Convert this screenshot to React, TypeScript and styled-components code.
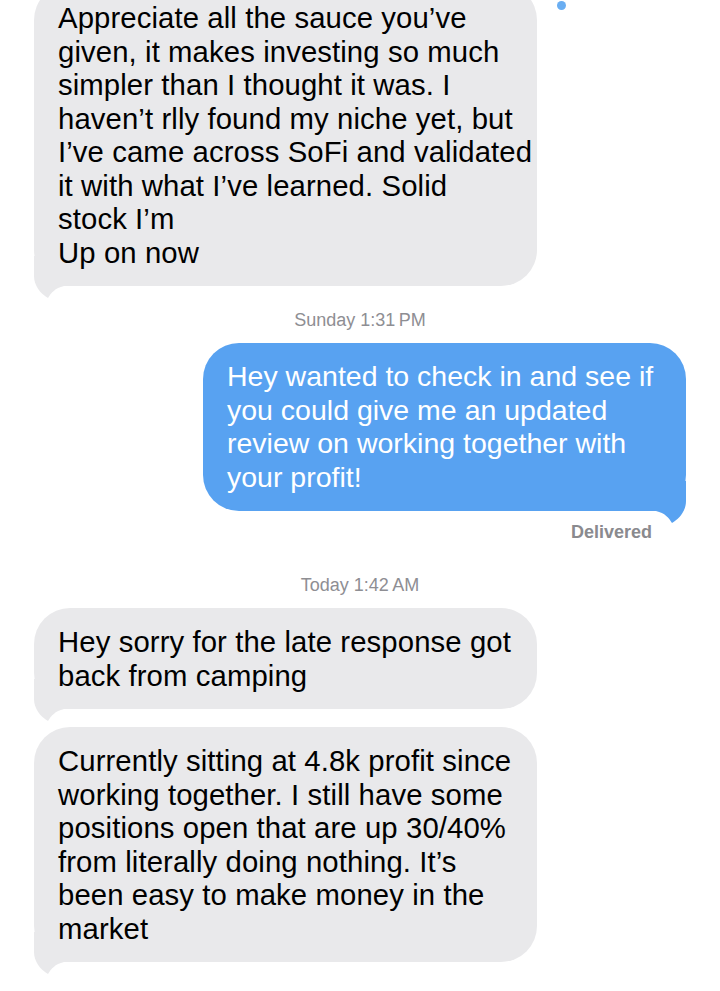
import React from "react";
import styled, { createGlobalStyle } from "styled-components";

const GlobalStyle = createGlobalStyle`
  html, body {
    margin: 0;
    padding: 0;
    background: #ffffff;
  }
  body {
    font-family: "Liberation Sans", Arial, sans-serif;
    overflow: hidden;
  }
`;

const GRAY = "#e9e9eb";
const BLUE = "#58a2f1";

type Side = "in" | "out";

// bubble tail, drawn for the left side; mirrored for sent messages
const Tail: React.FC<{ side: Side }> = ({ side }) => (
  <TailSvg $side={side} width="50" height="44" viewBox="0 0 50 44">
    <path
      d="M0 0 L0 20 C0 30 7 38 14 42 C17 37 21 32 30 30 L50 30 L50 0 Z"
      fill={side === "in" ? GRAY : BLUE}
    />
  </TailSvg>
);

const App: React.FC = () => {
  return (
    <>
      <GlobalStyle />
      <Screen>
        <Dot />
        <Row $side="in">
          <Bubble $side="in" $first>
            <Tail side="in" />
            <Text>{`Appreciate all the sauce you’ve
given, it makes investing so much
simpler than I thought it was. I
haven’t rlly found my niche yet, but
I’ve came across SoFi and validated
it with what I’ve learned. Solid
stock I’m
Up on now`}</Text>
          </Bubble>
        </Row>

        <Stamp>Sunday 1:31{"\u2009"}PM</Stamp>

        <Row $side="out">
          <Bubble $side="out">
            <Tail side="out" />
            <Text>{`Hey wanted to check in and see if
you could give me an updated
review on working together with
your profit!`}</Text>
          </Bubble>
        </Row>
        <Delivered>Delivered</Delivered>

        <Stamp $gap={33}>Today 1:42{"\u2009"}AM</Stamp>

        <Row $side="in">
          <Bubble $side="in">
            <Tail side="in" />
            <Text>{`Hey sorry for the late response got
back from camping`}</Text>
          </Bubble>
        </Row>
        <Row $side="in" $gap={18}>
          <Bubble $side="in">
            <Tail side="in" />
            <Text>{`Currently sitting at 4.8k profit since
working together. I still have some
positions open that are up 30/40%
from literally doing nothing. It’s
been easy to make money in the
market`}</Text>
          </Bubble>
        </Row>
      </Screen>
    </>
  );
};

export default App;

const Screen = styled.div`
  position: relative;
  width: 720px;
  height: 991px;
  overflow: hidden;
  background: #ffffff;
  display: flex;
  flex-direction: column;
  padding: 0 34px;
  box-sizing: border-box;
`;

const Dot = styled.div`
  position: absolute;
  left: 557px;
  top: 1px;
  width: 9px;
  height: 9px;
  border-radius: 50%;
  background: #6aaef2;
`;

const Row = styled.div<{ $side: Side; $gap?: number }>`
  display: flex;
  justify-content: ${(p) => (p.$side === "in" ? "flex-start" : "flex-end")};
  margin-top: ${(p) => p.$gap ?? 0}px;
`;

const Bubble = styled.div<{ $side: Side; $first?: boolean }>`
  position: relative;
  box-sizing: border-box;
  width: ${(p) => (p.$side === "in" ? 503 : 483)}px;
  margin-top: ${(p) => (p.$first ? -16 : 0)}px;
  padding: 17px 18px 17px 24px;
  border-radius: 36px;
  background: ${(p) => (p.$side === "in" ? GRAY : BLUE)};
  color: ${(p) => (p.$side === "in" ? "#000000" : "#ffffff")};
  font-size: ${(p) => (p.$side === "in" ? 29.3 : 28.5)}px;
  letter-spacing: ${(p) => (p.$side === "in" ? "0.1px" : "0")};
  line-height: 33.5px;
`;

const Text = styled.div`
  position: relative;
  z-index: 1;
  white-space: pre;
`;

const TailSvg = styled.svg<{ $side: Side }>`
  position: absolute;
  z-index: 0;
  bottom: -14px;
  ${(p) => (p.$side === "in" ? "left: 0;" : "right: 0; transform: scaleX(-1);")}
  display: block;
`;

const Stamp = styled.div<{ $gap?: number }>`
  margin-top: ${(p) => p.$gap ?? 24}px;
  margin-bottom: 13px;
  text-align: center;
  font-size: 18px;
  line-height: 20px;
  color: #8e8e93;
`;

const Delivered = styled.div`
  margin-top: 11px;
  padding-right: 34px;
  text-align: right;
  font-size: 18px;
  line-height: 20px;
  font-weight: 700;
  color: #8a8a8e;
`;
